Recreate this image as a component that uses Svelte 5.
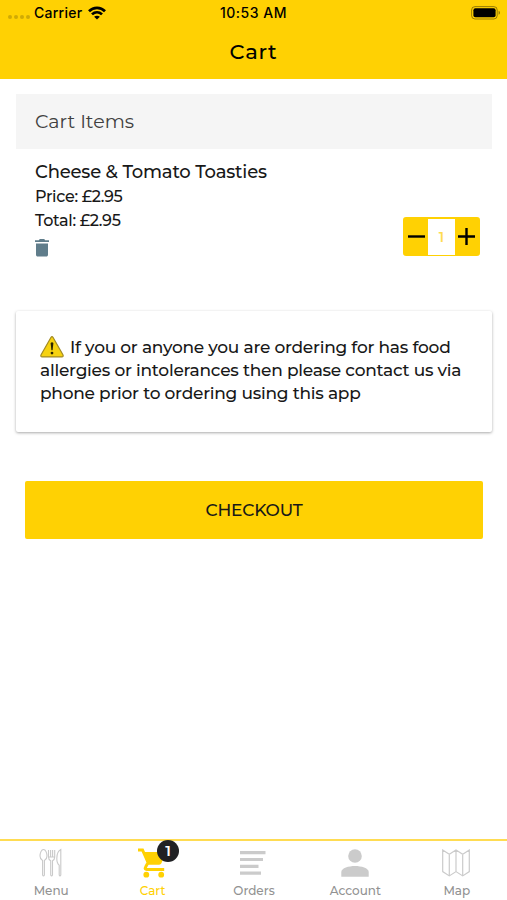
<script>
  let quantity = $state(1);
  const price = 2.95;
  const total = $derived((price * quantity).toFixed(2));

  const tabs = ['Menu', 'Cart', 'Orders', 'Account', 'Map'];
  let active = $state('Cart');

  /**
   * Change the quantity, never below one
   * @param {number} step
   */
  function change(step) {
    quantity = Math.max(1, quantity + step);
  }
</script>

<div class="app">
  <header>
    <div class="status">
      <div class="carrier">
        <span class="signal"><i></i><i></i><i></i><i></i></span>
        <span class="name">Carrier</span>
        <svg width="18" height="14" viewBox="0 0 18 14">
          <g fill="none" stroke="#000" stroke-width="2.7">
            <path d="M1 5.2C5.4.7 12.6.7 17 5.2" />
            <path d="M4 8.4c2.9-2.8 7.1-2.8 10 0" />
          </g>
          <path d="M9 13.6 6.1 10.8c1.7-1.5 4.1-1.5 5.8 0Z" />
        </svg>
      </div>
      <span class="time">10:53 AM</span>
      <svg class="battery" width="30" height="14" viewBox="0 0 30 14">
        <rect x=".6" y=".6" width="25.6" height="12.4" rx="3.4" fill="none" stroke="#000" stroke-opacity=".4" />
        <rect x="2.4" y="2.3" width="22.2" height="9" rx="2" />
        <path d="M27.6 4.8c1.8.7 1.8 3.3 0 4Z" fill-opacity=".45" />
      </svg>
    </div>
    <h1>Cart</h1>
  </header>

  <main>
    <h2>Cart Items</h2>
    <section class="item">
      <div class="details">
        <h3>Cheese &amp; Tomato Toasties</h3>
        <p>Price: £{price}</p>
        <p>Total: £{total}</p>
        <svg width="14" height="18" viewBox="0 0 14 18" fill="#607d8b">
          <path d="M0 1.2h3.8L4.8 0h4.4l1 1.2H14v1.9H0z" />
          <path d="M1 4.4h12v11.4c0 1-.8 1.8-1.8 1.8H2.8c-1 0-1.8-.8-1.8-1.8z" />
        </svg>
      </div>
      <div class="stepper">
        <button aria-label="Remove one" onclick={() => change(-1)}>
          <svg width="19" height="19" viewBox="0 0 19 19"><path d="M1 9.5h17" /></svg>
        </button>
        <span>{quantity}</span>
        <button aria-label="Add one" onclick={() => change(1)}>
          <svg width="19" height="19" viewBox="0 0 19 19"><path d="M1 9.5h17M9.5 1v17" /></svg>
        </button>
      </div>
    </section>

    <section class="notice">
      <svg width="24" height="22" viewBox="0 0 24 22">
        <path d="M10.9 1.5q1.1-1.6 2.2 0l9.8 17.2q.9 2-1.1 2.2H2.2q-2-.2-1.1-2.2Z" fill="#f6d211" stroke="#a28a24" stroke-width="1.2" />
        <path d="M10.6 7q1.4-1.3 2.8 0l-.8 7.3h-1.2Z" fill="#2a2500" />
        <circle cx="12" cy="17.1" r="1.4" fill="#2a2500" />
      </svg>
      <p>
        If you or anyone you are ordering for has food<br />
        allergies or intolerances then please contact us via<br />
        phone prior to ordering using this app
      </p>
    </section>

    <button class="checkout">CHECKOUT</button>
  </main>

  <nav>
    {#each tabs as tab}
      <button class={['tab', { active: tab === active }]} onclick={() => (active = tab)}>
        <span class="icon">
          {#if tab === 'Menu'}
            <svg width="24" height="30" viewBox="0 0 24 30" fill="none" stroke="#c9c9c9" stroke-width="1.1">
              <path d="M4.5 1.5C2.4 1.5 1 5 1 8c0 2.6 1.4 3.9 2.6 4.6V27q.9 1.8 1.8 0V12.6C6.6 11.9 8 10.6 8 8c0-3-1.4-6.5-3.5-6.5Z" />
              <path d="M9.5 2v7c0 2 1.2 3.3 2.2 3.8V27q.9 1.8 1.8 0V12.8c1-.5 2.2-1.8 2.2-3.8V2M11.6 2v7M13.6 2v7M9.5 9h6.2" />
              <path d="M21.8 1.5c-3 1.5-4 6-4 9 0 3.5 1.5 6 2.4 6.7V27q.8 1.8 1.6 0Z" />
            </svg>
          {:else if tab === 'Cart'}
            <svg width="30" height="30" viewBox="0 0 30 30" fill="none" stroke="currentColor">
              <path d="M1 2h4.5l6 13.5" stroke-width="3" />
              <path d="M6 4h21.5c1 0 1.5.8 1 1.6L24.5 15c-.5.9-1.3 1.7-2.3 1.7H10.5Z" fill="currentColor" stroke="none" />
              <path d="m10.5 15.500-2 3.700c-.8 1.300-.2 2.300 1.200 2.300h17.500" stroke-width="3" />
              <circle cx="9.3" cy="26.7" r="2.9" fill="currentColor" stroke="none" />
              <circle cx="24.2" cy="26.7" r="2.9" fill="currentColor" stroke="none" />
            </svg>
            <b class="badge">{quantity}</b>
          {:else if tab === 'Orders'}
            <svg width="26" height="26" viewBox="0 0 26 26" stroke="#cbcbcb" stroke-width="3.2">
              <path d="M0 2.6h25.5M0 9.5h23M0 16.3h18.5M0 23.2h21" />
            </svg>
          {:else if tab === 'Account'}
            <svg width="28" height="28" viewBox="0 0 28 28" fill="#cbcbcb">
              <circle cx="14" cy="7" r="6.8" />
              <path d="M.3 27.7V23c0-4 7.5-6 13.7-6s13.7 2 13.7 6v4.7Z" />
            </svg>
          {:else}
            <svg width="28" height="28" viewBox="0 0 28 28" fill="none" stroke="#cbcbcb" stroke-width="1.2">
              <path d="m.7 1 6.6 4.2L14 1l6.7 4.2L27.3 1v21.6l-6.6 4.3L14 22.6l-6.7 4.3-6.6-4.3ZM7.3 5.2v21.7M14 1v21.6M20.7 5.2v21.7" />
            </svg>
          {/if}
        </span>
        <span class="label">{tab}</span>
      </button>
    {/each}
  </nav>
</div>

<style>
  :global(body) {
    margin: 0;
    background: #fff;
  }

  .app {
    --yellow: #ffd103;
    display: flex;
    flex-direction: column;
    height: 900px;
    font-family: Montserrat, Inter, 'Liberation Sans', sans-serif;
    font-weight: 500;
    color: #181818;
  }

  svg {
    display: block;
  }

  h1,
  h2,
  h3,
  p {
    margin: 0;
    font-weight: 500;
    white-space: nowrap;
  }

  button {
    padding: 0;
    border: 0;
    font: inherit;
    color: inherit;
    background: none;
  }

  header {
    height: 79px;
    background: var(--yellow);
    color: #000;
  }

  .status {
    display: grid;
    grid-template-columns: 1fr auto 1fr;
    align-items: center;
    height: 26px;
    padding: 0 6px 0 8px;
    font: 500 14px/26px Inter, sans-serif;
    letter-spacing: 0.25px;
  }

  .carrier {
    display: flex;
    align-items: center;
  }

  .signal {
    display: flex;
    gap: 2px;
    width: 26px;
    padding-top: 8px;
  }

  .signal i {
    width: 4px;
    height: 4px;
    border-radius: 50%;
    background: #d0aa05;
  }

  .name {
    width: 54px;
  }

  .time {
    margin-right: 2px;
    letter-spacing: 0.5px;
  }

  .battery {
    justify-self: end;
  }

  h1 {
    font-size: 21px;
    line-height: 52px;
    letter-spacing: 0.7px;
    text-align: center;
  }

  main {
    flex: 1;
    padding: 15px 15px 0 16px;
  }

  h2 {
    height: 55px;
    padding-left: 19px;
    background: #f5f5f5;
    color: #404040;
    font-size: 19px;
    font-weight: 400;
    line-height: 55px;
  }

  .item {
    display: flex;
    justify-content: space-between;
    height: 162px;
    padding: 11px 12px 0 19px;
    box-sizing: border-box;
  }

  h3 {
    font-size: 18px;
    line-height: 25px;
    letter-spacing: -0.2px;
  }

  .item p {
    font-size: 16px;
    line-height: 24px;
    letter-spacing: -0.3px;
  }

  .item .details svg {
    margin-top: 6px;
  }

  .stepper {
    display: grid;
    grid-template-columns: 23px 27px 23px;
    align-self: flex-start;
    margin-top: 57px;
    border: 2px solid var(--yellow);
    border-radius: 3px;
    height: 35px;
    background: var(--yellow);
  }

  .stepper button {
    display: grid;
    place-items: center;
  }

  .stepper svg {
    margin-bottom: 1px;
    fill: none;
    stroke: #000;
    stroke-width: 2.4;
  }

  .stepper span {
    background: #fff;
    color: #ffdc50;
    font-size: 14px;
    font-weight: 600;
    line-height: 36px;
    text-align: center;
  }

  .notice {
    height: 121px;
    padding: 25px 0 0 24px;
    border-radius: 2px;
    box-sizing: border-box;
    box-shadow: 0 1px 3px rgba(0, 0, 0, 0.34);
  }

  .notice svg {
    float: left;
    margin-right: 6px;
  }

  .notice p {
    font-size: 17px;
    line-height: 23px;
    letter-spacing: -0.24px;
  }

  .checkout {
    display: block;
    width: 458px;
    height: 58px;
    margin: 49px 0 0 9px;
    border-radius: 2px;
    background: var(--yellow);
    font-size: 17px;
    letter-spacing: -0.2px;
  }

  nav {
    display: grid;
    grid-template-columns: repeat(5, 1fr);
    height: 59px;
    border-top: 2px solid #ffdc52;
  }

  .tab {
    display: flex;
    flex-direction: column;
    align-items: center;
    color: #929292;
    font-size: 12px;
  }

  .tab.active {
    color: var(--yellow);
  }

  .icon {
    position: relative;
    display: flex;
    align-items: center;
    justify-content: center;
    height: 44px;
  }

  .label {
    padding-left: 1px;
    line-height: 12px;
  }

  .badge {
    position: absolute;
    top: -1px;
    left: 20px;
    width: 22px;
    height: 22px;
    border-radius: 50%;
    background: #202124;
    color: #fff;
    font-size: 15px;
    font-weight: 600;
    line-height: 22px;
    text-align: center;
  }
</style>
